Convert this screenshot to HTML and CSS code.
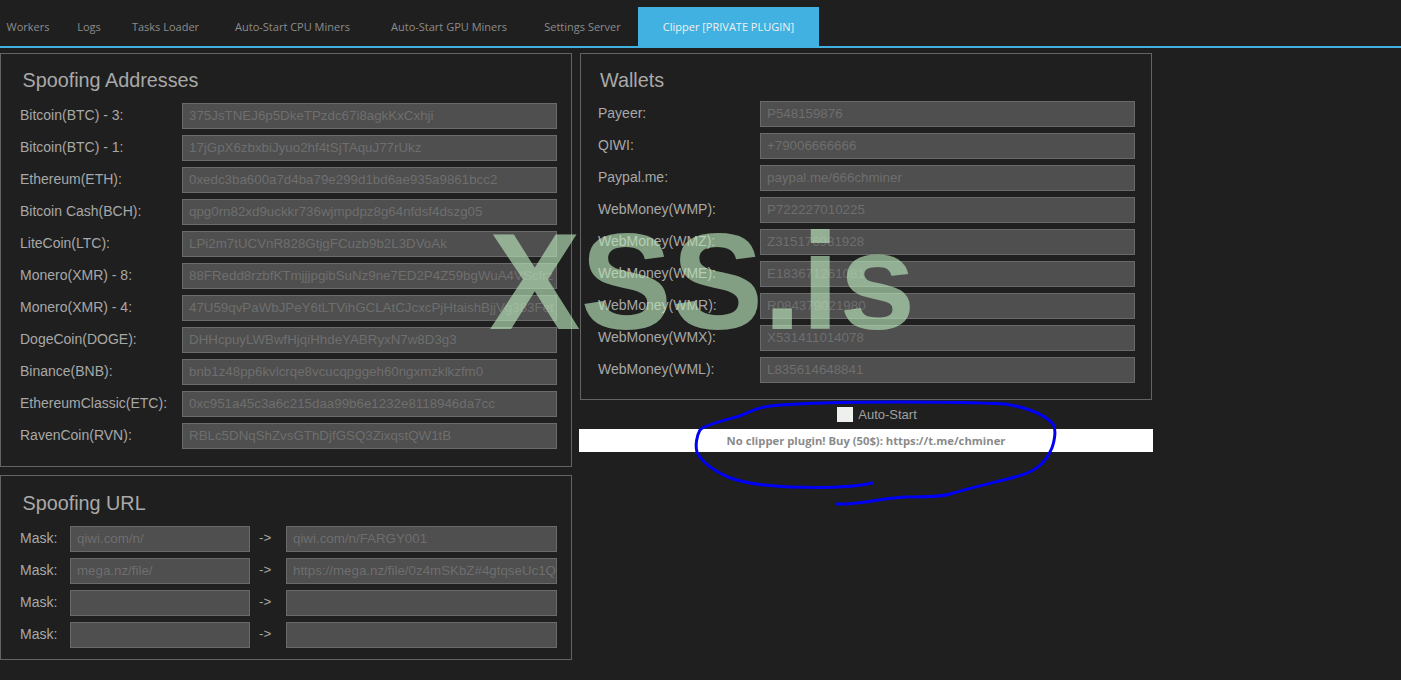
FILE: index.html
```html
<!DOCTYPE html>
<html lang="en">
<head>
<meta charset="utf-8">
<title>Clipper</title>
<link rel="stylesheet" href="styles.css">
</head>
<body>
<nav class="tabs">
  <a class="tab t1">Workers</a>
  <a class="tab t2">Logs</a>
  <a class="tab t3">Tasks Loader</a>
  <a class="tab t4">Auto-Start CPU Miners</a>
  <a class="tab t5">Auto-Start GPU Miners</a>
  <a class="tab t6">Settings Server</a>
  <a class="tab active">Clipper [PRIVATE PLUGIN]</a>
</nav>
<main class="content">
  <div class="col col-left">
    <section class="panel addresses">
      <h2 class="title">Spoofing Addresses</h2>
      <div class="row"><label>Bitcoin(BTC) - 3:</label><div class="field">375JsTNEJ6p5DkeTPzdc67i8agkKxCxhji</div></div>
      <div class="row"><label>Bitcoin(BTC) - 1:</label><div class="field">17jGpX6zbxbiJyuo2hf4tSjTAquJ77rUkz</div></div>
      <div class="row"><label>Ethereum(ETH):</label><div class="field">0xedc3ba600a7d4ba79e299d1bd6ae935a9861bcc2</div></div>
      <div class="row"><label>Bitcoin Cash(BCH):</label><div class="field">qpg0rn82xd9uckkr736wjmpdpz8g64nfdsf4dszg05</div></div>
      <div class="row"><label>LiteCoin(LTC):</label><div class="field">LPi2m7tUCVnR828GtjgFCuzb9b2L3DVoAk</div></div>
      <div class="row"><label>Monero(XMR) - 8:</label><div class="field">88FRedd8rzbfKTmjjjpgibSuNz9ne7ED2P4Z59bgWuA4VScfrz</div></div>
      <div class="row"><label>Monero(XMR) - 4:</label><div class="field">47U59qvPaWbJPeY6tLTVihGCLAtCJcxcPjHtaishBjjVg383Fet</div></div>
      <div class="row"><label>DogeCoin(DOGE):</label><div class="field">DHHcpuyLWBwfHjqiHhdeYABRyxN7w8D3g3</div></div>
      <div class="row"><label>Binance(BNB):</label><div class="field">bnb1z48pp6kvlcrqe8vcucqpggeh60ngxmzklkzfm0</div></div>
      <div class="row"><label>EthereumClassic(ETC):</label><div class="field">0xc951a45c3a6c215daa99b6e1232e8118946da7cc</div></div>
      <div class="row"><label>RavenCoin(RVN):</label><div class="field">RBLc5DNqShZvsGThDjfGSQ3ZixqstQW1tB</div></div>
    </section>
    <section class="panel urls">
      <h2 class="title">Spoofing URL</h2>
      <div class="row mask"><label>Mask:</label><div class="field short">qiwi.com/n/</div><span class="arrow">-&gt;</span><div class="field long">qiwi.com/n/FARGY001</div></div>
      <div class="row mask"><label>Mask:</label><div class="field short">mega.nz/file/</div><span class="arrow">-&gt;</span><div class="field long">https://mega.nz/file/0z4mSKbZ#4gtqseUc1Q</div></div>
      <div class="row mask"><label>Mask:</label><div class="field short"></div><span class="arrow">-&gt;</span><div class="field long"></div></div>
      <div class="row mask"><label>Mask:</label><div class="field short"></div><span class="arrow">-&gt;</span><div class="field long"></div></div>
    </section>
  </div>
  <div class="col col-right">
    <section class="panel wallets">
      <h2 class="title">Wallets</h2>
      <div class="row"><label>Payeer:</label><div class="field">P548159876</div></div>
      <div class="row"><label>QIWI:</label><div class="field">+79006666666</div></div>
      <div class="row"><label>Paypal.me:</label><div class="field">paypal.me/666chminer</div></div>
      <div class="row"><label>WebMoney(WMP):</label><div class="field">P722227010225</div></div>
      <div class="row"><label>WebMoney(WMZ):</label><div class="field">Z315176981928</div></div>
      <div class="row"><label>WebMoney(WME):</label><div class="field">E183671261081</div></div>
      <div class="row"><label>WebMoney(WMR):</label><div class="field">R084379021980</div></div>
      <div class="row"><label>WebMoney(WMX):</label><div class="field">X531411014078</div></div>
      <div class="row"><label>WebMoney(WML):</label><div class="field">L835614648841</div></div>
    </section>
    <div class="autostart"><span class="check"></span><span>Auto-Start</span></div>
    <div class="notice">No clipper plugin! Buy (50$): https://t.me/chminer</div>
  </div>
</main>
<div class="watermark">XSS.is</div>
<svg class="scribble" width="1401" height="680" viewBox="0 0 1401 680" aria-hidden="true">
  <path d="M872 483 C855 487 820 488 790 487 C765 486 745 484 728 477 C712 470 700 460 697 452 C695 445 697 435 700 430 C704 425 725 420 740 416 C750 412 755 408 770 406 C800 403 860 402 900 402 C940 402 985 403 1005 404 C1030 408 1045 415 1053 424 C1057 430 1054 445 1050 452 C1044 464 1035 472 1015 477 C1000 481 970 488 950 494 C940 497 925 497 905 497 C880 498 860 505 837 504" />
</svg>
</body>
</html>
```
FILE: styles.css
```css
html, body {
  margin: 0;
  padding: 0;
  height: 680px;
  overflow: hidden;
  background: #1f1f1f;
}
body {
  position: relative;
  font-family: "Liberation Sans", Arial, sans-serif;
  color: #a8a8a8;
}
.tabs {
  display: flex;
  box-sizing: border-box;
  height: 48px;
  padding-top: 7px;
  border-bottom: 2px solid #41b1e1;
  font-family: "Open Sans", "Noto Sans", sans-serif;
  font-size: 11px;
}
.tab {
  display: flex;
  align-items: center;
  justify-content: center;
  color: #8c8c8c;
  box-sizing: border-box;
}
.t1 { width: 56px; }
.t2 { width: 66px; }
.t3 { width: 87px; }
.t4 { width: 167px; }
.t5 { width: 146px; }
.t6 { width: 111px; margin-left: 5px; }
.tab.active {
  width: 181px;
  background: #41b1e1;
  color: #f0f0f0;
}
.content {
  display: flex;
  gap: 8px;
  padding-top: 5px;
  align-items: flex-start;
}
.col {
  width: 572px;
  display: flex;
  flex-direction: column;
}
.panel {
  box-sizing: border-box;
  border: 1px solid #636363;
}
.addresses { height: 414px; padding: 13px 14px 0 19px; }
.urls { height: 185px; margin-top: 8px; padding: 14px 14px 0 19px; }
.wallets { height: 347px; padding: 13px 16px 0 17px; }
.title {
  margin: 0 0 10px 2.5px;
  font-size: 19.8px;
  font-weight: 400;
  line-height: 26px;
  color: #a9a9a9;
}
.wallets .title { margin-left: 2px; margin-bottom: 8px; }
.urls .title { margin-bottom: 10px; }
.row {
  display: flex;
  align-items: center;
  height: 26px;
  margin-bottom: 6px;
}
.row label {
  width: 162px;
  flex: none;
  font-size: 14px;
  line-height: 24px;
  margin-bottom: 2px;
  color: #a8a8a8;
}
.field {
  box-sizing: border-box;
  flex: 1;
  min-width: 0;
  height: 26px;
  padding: 0 3px 0 6px;
  border: 1px solid #6a6a6a;
  background: #4f4f4f;
  color: #6e6e6e;
  font-size: 13.33px;
  line-height: 24px;
  white-space: nowrap;
  overflow: hidden;
}
.mask label { width: 50px; }
.field.short { flex: none; width: 180px; }
.field.long { flex: none; width: 271px; }
.arrow {
  flex: none;
  width: 36px;
  padding-left: 9px;
  margin-bottom: 3px;
  box-sizing: border-box;
  font-size: 13.33px;
  color: #a8a8a8;
}
.autostart {
  display: flex;
  align-items: center;
  justify-content: center;
  gap: 5px;
  height: 29px;
  padding-left: 22px;
  font-size: 13px;
  color: #a0a0a0;
}
.check {
  width: 16px;
  height: 15px;
  background: #eef0ee;
}
.notice {
  margin-left: -1px;
  width: 574px;
  height: 23px;
  background: #fff;
  color: #8a8a8a;
  text-align: center;
  font-family: "Open Sans", "Noto Sans", sans-serif;
  font-size: 11.25px;
  font-weight: 700;
  line-height: 23px;
}
.watermark {
  position: absolute;
  left: 489px;
  top: 202px;
  font-family: "Liberation Sans", Arial, sans-serif;
  font-size: 137px;
  font-weight: 700;
  line-height: 160px;
  color: rgba(186, 229, 186, 0.65);
  white-space: nowrap;
}
.scribble {
  position: absolute;
  left: 0;
  top: 0;
  pointer-events: none;
}
.scribble path {
  fill: none;
  stroke: #0000f5;
  stroke-width: 3;
  stroke-linecap: round;
  stroke-linejoin: round;
}
```
